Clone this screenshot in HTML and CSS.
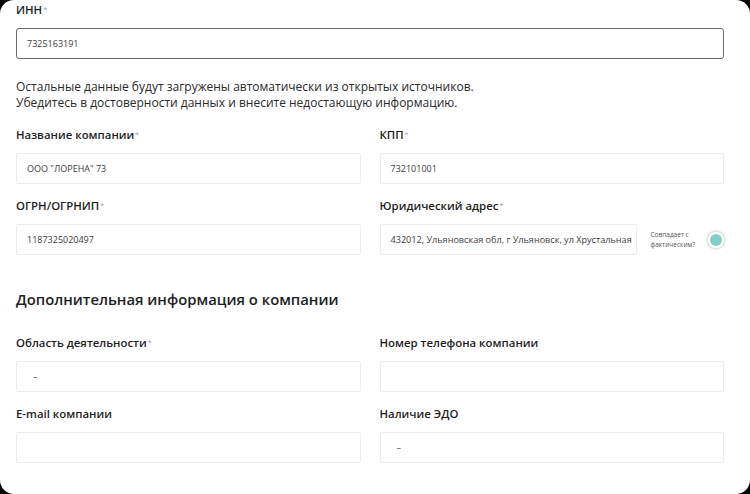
FILE: index.html
```html
<!DOCTYPE html>
<html>
<head>
<meta charset="utf-8">
<title>Данные компании</title>
<link rel="stylesheet" href="styles.css">
</head>
<body>
    <div class="card">
        <div class="field">
            <label class="label">ИНН<sup>*</sup></label>
            <div class="input input-dark">7325163191</div>
        </div>

        <p class="note">Остальные данные будут загружены автоматически из открытых источников.<br>Убедитесь в достоверности данных и внесите недостающую информацию.</p>

        <div class="grid">
            <div class="field">
                <label class="label">Название компании<sup>*</sup></label>
                <div class="input">ООО "ЛОРЕНА" 73</div>
            </div>
            <div class="field">
                <label class="label">КПП<sup>*</sup></label>
                <div class="input">732101001</div>
            </div>
            <div class="field">
                <label class="label">ОГРН/ОГРНИП<sup>*</sup></label>
                <div class="input">1187325020497</div>
            </div>
            <div class="field">
                <label class="label">Юридический адрес<sup>*</sup></label>
                <div class="address-row">
                    <div class="input input-address">432012, Ульяновская обл, г Ульяновск, ул Хрустальная</div>
                    <span class="match-text">Совпадает с<br>фактическим?</span>
                    <span class="radio"><span class="radio-dot"></span></span>
                </div>
            </div>
        </div>

        <h2 class="section-title">Дополнительная информация о компании</h2>

        <div class="grid">
            <div class="field">
                <label class="label">Область деятельности<sup>*</sup></label>
                <div class="input"><span class="dash">–</span></div>
            </div>
            <div class="field">
                <label class="label">Номер телефона компании</label>
                <div class="input"></div>
            </div>
            <div class="field">
                <label class="label">E-mail компании</label>
                <div class="input"></div>
            </div>
            <div class="field">
                <label class="label">Наличие ЭДО</label>
                <div class="input"><span class="dash">–</span></div>
            </div>
        </div>
    </div>
</body>
</html>
```

FILE: styles.css
```css
body {
    margin: 0;
    background-color: #000000;
    font-family: 'Open Sans', 'Noto Sans', sans-serif;
    color: #1e1e1e;
}

.card {
    width: 750px;
    height: 494px;
    box-sizing: border-box;
    background-color: #ffffff;
    border-radius: 14px;
    padding: 2px 26px 0 16px;
    overflow: hidden;
}

.field {
    display: flex;
    flex-direction: column;
    min-width: 0;
}

.label {
    font-size: 11.4px;
    line-height: 16px;
    font-weight: 600;
    margin-bottom: 10px;
    color: #1e1e1e;
}

.label sup {
    font-size: 7px;
    font-weight: 400;
    color: #9a9a9a;
    vertical-align: top;
    margin-left: 1px;
}

.input {
    height: 31px;
    box-sizing: border-box;
    border: 1px solid #ececec;
    border-radius: 2px;
    padding: 0 10px;
    display: flex;
    align-items: center;
    font-size: 9px;
    color: #3c3c3c;
    white-space: nowrap;
    overflow: hidden;
}

.input-dark {
    border: 1px solid #6b6b6b;
    border-radius: 3px;
}

.dash {
    padding-left: 6px;
    color: #555555;
}

.note {
    margin: 20px 0 16px;
    font-size: 12px;
    line-height: 16px;
    color: #2a2a2a;
}

.grid {
    display: grid;
    grid-template-columns: minmax(0, 1fr) minmax(0, 1fr);
    column-gap: 19px;
    row-gap: 14px;
}

.address-row {
    display: flex;
    align-items: center;
}

.input-address {
    width: 257px;
    flex: none;
    font-size: 9.1px;
}

.match-text {
    margin-left: 14px;
    font-size: 6.5px;
    line-height: 10px;
    color: #555555;
    flex: none;
}

.radio {
    flex: none;
    margin-left: 11px;
    width: 20px;
    height: 20px;
    box-sizing: border-box;
    border-radius: 50%;
    border: 2px solid #e6e6e6;
    display: flex;
    align-items: center;
    justify-content: center;
}

.radio-dot {
    width: 12px;
    height: 12px;
    border-radius: 50%;
    background-color: #84cfc5;
}

.section-title {
    margin: 33px 0 25px;
    font-size: 14.8px;
    line-height: 22px;
    font-weight: 600;
    color: #1e1e1e;
}
```
